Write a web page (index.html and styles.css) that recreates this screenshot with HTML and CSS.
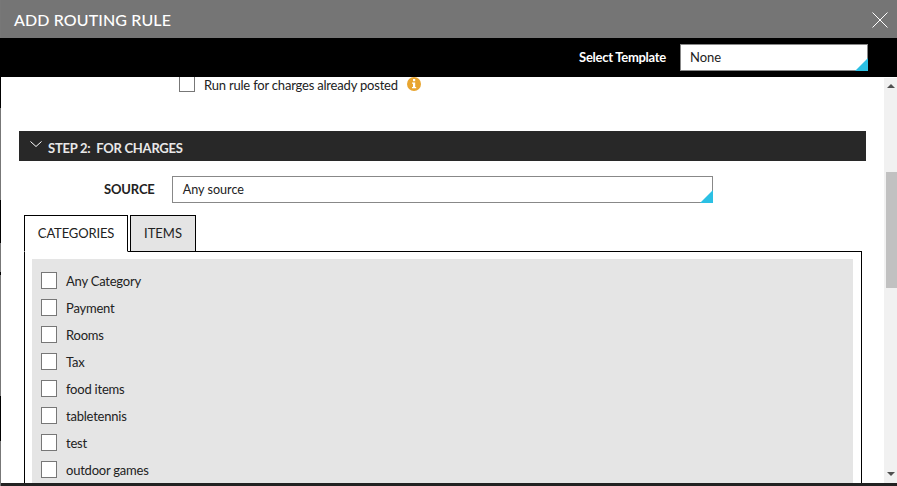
FILE: index.html
```html
<!DOCTYPE html>
<html lang="en">
<head>
<meta charset="utf-8">
<title>Add Routing Rule</title>
<link rel="stylesheet" href="styles.css">
</head>
<body>
<div class="dialog">
  <header class="title-bar">
    <h1 class="title">ADD ROUTING RULE</h1>
    <svg class="close" width="16" height="16" viewBox="0 0 16 16"><path d="M.5.5l15 15M15.500.5l-15 15" stroke="#fff" stroke-width="1" fill="none"/></svg>
  </header>
  <div class="template-bar">
    <span class="template-label">Select Template</span>
    <div class="select template-select"><span>None</span></div>
  </div>
  <div class="body">
    <main class="content">
      <div class="run-row">
        <span class="check"></span>
        <span class="run-label">Run rule for charges already posted</span>
        <svg class="info" width="14" height="14" viewBox="0 0 14 14"><circle cx="7" cy="7" r="7" fill="#e8a530"/><rect x="6" y="2" width="2.200" height="2.200" fill="#fff"/><path d="M5 5.500h3.200v4.500h1v1.300H5V10h1V6.800H5z" fill="#fff"/></svg>
      </div>
      <section class="step">
        <svg class="chev" width="12" height="7" viewBox="0 0 12 7"><path d="M.5.500l5.500 5 5.500-5" stroke="#fff" stroke-width="1" fill="none"/></svg>
        <h2 class="step-title">STEP 2:&nbsp; FOR CHARGES</h2>
      </section>
      <div class="source-row">
        <span class="source-label">SOURCE</span>
        <div class="select source-select"><span>Any source</span></div>
      </div>
      <div class="tabs">
        <div class="tab tab-active">CATEGORIES</div>
        <div class="tab tab-idle">ITEMS</div>
      </div>
      <div class="panel">
        <ul class="list">
          <li class="item"><span class="check check-list"></span>Any Category</li>
          <li class="item"><span class="check check-list"></span>Payment</li>
          <li class="item"><span class="check check-list"></span>Rooms</li>
          <li class="item"><span class="check check-list"></span>Tax</li>
          <li class="item"><span class="check check-list"></span>food items</li>
          <li class="item"><span class="check check-list"></span>tabletennis</li>
          <li class="item"><span class="check check-list"></span>test</li>
          <li class="item"><span class="check check-list"></span>outdoor games</li>
        </ul>
      </div>
    </main>
    <aside class="scrollbar">
      <span class="arrow arrow-up"></span>
      <span class="thumb"></span>
      <span class="arrow arrow-down"></span>
    </aside>
  </div>
  <div class="bottom"></div>
</div>
</body>
</html>
```
FILE: styles.css
```css
* { box-sizing: border-box; }
html, body { margin: 0; padding: 0; height: 100%; }
body { overflow: hidden; background: #fff; font-family: Lato, "Open Sans", sans-serif; color: #222; }
.dialog { width: 897px; height: 486px; display: flex; flex-direction: column; padding-left: 1px; background: linear-gradient(to bottom, #777 0, #777 38px, #000 38px, #000 108px, #777 108px, #777 200px, #000 200px, #000 243px, #777 243px, #777 272px, #000 272px, #000 275px, #777 275px, #777 396px, #000 396px, #000 441px, #777 441px, #777 486px) no-repeat 0 0 / 1px 100%; }
.title-bar { height: 38px; flex: none; background: #757575; display: flex; align-items: center; justify-content: space-between; padding: 0 9px 0 13px; }
.title { margin: 0; font-size: 16px; font-weight: 500; color: #fff; letter-spacing: 0.12px; }
.close { margin-top: 2px; }
.template-bar { height: 39px; flex: none; background: #000; display: flex; align-items: center; justify-content: flex-end; padding-right: 29px; gap: 14px; }
.template-label { font-size: 13px; font-weight: 700; color: #fff; letter-spacing: -0.27px; padding-bottom: 2px; }
.select { position: relative; background: #fff; border: 1px solid #888; display: flex; align-items: center; font-size: 12.6px; color: #222; }
.select::after { content: ""; position: absolute; right: -1px; bottom: -1px; border-style: solid; border-width: 0 0 13px 13px; border-color: transparent transparent #2bc0e4 transparent; }
.template-select { width: 188px; height: 27px; padding: 0 0 2px 9px; font-size: 13px; }
.body { height: 406px; flex: none; display: flex; overflow: hidden; background: #fff; }
.content { flex: 1; min-width: 0; padding: 0 18px 0 18px; overflow: hidden; }
.run-row { height: 55px; display: flex; align-items: flex-start; padding-left: 160px; margin-top: -1px; }
.run-label { font-size: 13px; margin: 1px 9px 0 9px; line-height: 16px; letter-spacing: -0.2px; }
.info { margin-top: 1px; }
.check { display: block; flex: none; width: 16px; height: 16px; background: #fff; border: 1px solid #777; }
.step { height: 30px; background: #282828; display: flex; align-items: center; padding-left: 11px; gap: 6px; }
.chev { margin-bottom: 3px; }
.step-title { margin: 0; padding-top: 4px; font-size: 13px; font-weight: 700; color: #e8e8e8; letter-spacing: -0.25px; }
.source-row { display: flex; align-items: center; margin-top: 15px; padding-left: 85px; gap: 17px; }
.source-label { font-size: 13px; font-weight: 700; color: #222; letter-spacing: -0.15px; padding-bottom: 1px; }
.source-select { width: 541px; height: 27px; padding-left: 10px; }
.tabs { display: flex; margin-top: 12px; padding-left: 5px; gap: 2px; position: relative; z-index: 1; }
.tab { height: 37px; border: 1px solid #000; display: flex; align-items: center; justify-content: center; font-size: 13px; color: #222; padding-bottom: 1px; }
.tab-active { width: 104px; background: #fff; border-bottom-color: #fff; letter-spacing: -0.15px; }
.tab-idle { width: 66px; height: 36px; background: #e4e4e4; border-bottom: 0; }
.panel { margin: -1px 4px 0 5px; border: 1px solid #000; border-bottom: 0; padding: 7px 8px 0 7px; }
.list { list-style: none; margin: 0; padding: 8px 9px 4px; background: #e5e5e5; }
.item { height: 27px; display: flex; align-items: center; gap: 9px; font-size: 13px; color: #222; letter-spacing: -0.22px; }
.check-list { width: 16px; height: 17px; }
.scrollbar { width: 13px; flex: none; margin-top: 1px; background: #f1f1f1; position: relative; display: flex; justify-content: flex-end; }
.thumb { position: absolute; right: 0; top: 94px; width: 11px; height: 116px; background: #c1c1c1; }
.arrow { position: absolute; left: 3px; border-style: solid; border-color: transparent; }
.arrow-up { top: 6px; border-width: 0 4px 4px; border-bottom-color: #505050; }
.arrow-down { bottom: 7px; border-width: 4px 4px 0; border-top-color: #505050; }
.bottom { height: 3px; flex: none; background: #222; }
```
